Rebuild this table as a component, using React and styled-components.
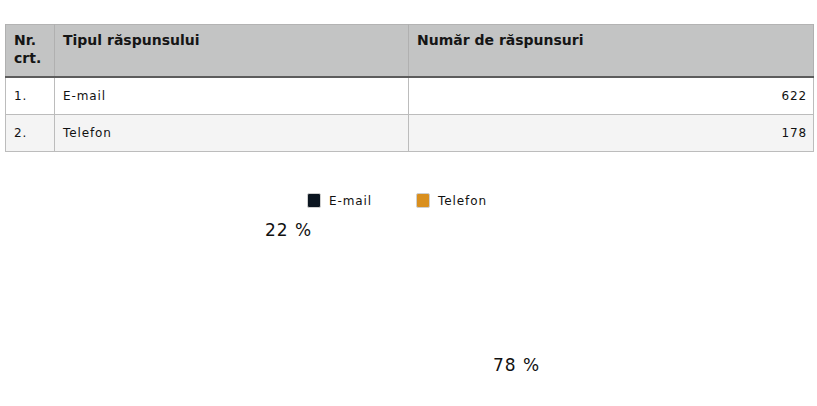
import React from "react";
import styled, { createGlobalStyle } from "styled-components";

const Global = createGlobalStyle`
  html, body { margin: 0; padding: 0; background: #ffffff; }
  body { font-family: "DejaVu Sans", Verdana, sans-serif; color: #111111; }
`;

const Page = styled.div`
  padding: 24px 4px 0 5px;
  width: 817px;
  box-sizing: border-box;
`;

const Table = styled.table`
  width: 808px;
  border-collapse: collapse;
  border: 1px solid #b3b3b3;
  table-layout: fixed;
`;

const HeadCell = styled.th`
  background: #c3c4c4;
  border-left: 1px solid #b0b0b0;
  border-right: 1px solid #b0b0b0;
  border-bottom: 2px solid #5c5c5c;
  text-align: left;
  vertical-align: top;
  padding: 6px 8px 8px 8px;
  height: 37px;
  font-size: 14px;
  line-height: 18px;
  font-weight: bold;
  color: #151515;
`;

const Row = styled.tr`
  background: ${(p) => (p.$alt ? "#f4f4f4" : "#ffffff")};
`;

const Cell = styled.td`
  border: 1px solid #bcbcbc;
  padding: 0 6px 0 8px;
  height: 36px;
  font-size: 12px;
  letter-spacing: 0.9px;
  text-align: ${(p) => (p.$right ? "right" : "left")};
  vertical-align: middle;
  color: #111111;
`;

const Chart = styled.div`
  position: relative;
  height: 254px;
`;

const Legend = styled.div`
  display: flex;
  align-items: center;
  gap: 44px;
  padding: 41px 0 0 302px;
`;

const LegendItem = styled.div`
  display: flex;
  align-items: center;
  gap: 8px;
  font-size: 12px;
  letter-spacing: 0.9px;
  color: #111111;
`;

const Swatch = styled.span`
  display: inline-block;
  width: 12px;
  height: 13px;
  border-radius: 2px;
  background: ${(p) => p.$color};
  border: 1px solid #cfcfcf;
`;

const Label = styled.div`
  position: absolute;
  font-size: 17px;
  letter-spacing: 1px;
  color: #111111;
  white-space: nowrap;
`;

const rows = [
  { nr: "1.", tip: "E-mail", n: 622 },
  { nr: "2.", tip: "Telefon", n: 178 },
];

export default function App() {
  return (
    <>
      <Global />
      <Page>
        <Table>
          <colgroup>
            <col style={{ width: 49 }} />
            <col style={{ width: 354 }} />
            <col style={{ width: 405 }} />
          </colgroup>
          <thead>
            <tr>
              <HeadCell>Nr. crt.</HeadCell>
              <HeadCell>Tipul răspunsului</HeadCell>
              <HeadCell>Număr de răspunsuri</HeadCell>
            </tr>
          </thead>
          <tbody>
            {rows.map((r, i) => (
              <Row key={r.nr} $alt={i % 2 === 1}>
                <Cell>{r.nr}</Cell>
                <Cell>{r.tip}</Cell>
                <Cell $right>{r.n}</Cell>
              </Row>
            ))}
          </tbody>
        </Table>
        <Chart>
          <Legend>
            <LegendItem>
              <Swatch $color="#0b1520" />
              E-mail
            </LegendItem>
            <LegendItem>
              <Swatch $color="#d98f1e" />
              Telefon
            </LegendItem>
          </Legend>
          <Label style={{ left: 260, top: 68 }}>22 %</Label>
          <Label style={{ left: 488, top: 203 }}>78 %</Label>
        </Chart>
      </Page>
    </>
  );
}
